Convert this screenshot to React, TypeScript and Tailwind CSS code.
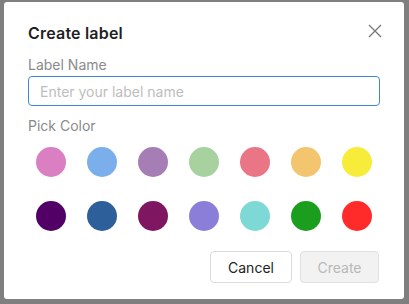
import React, { useState } from "react";

const COLORS = [
  ["#DA7FC1", "#7BAFEC", "#A67DB5", "#A8D1A0", "#EA7585", "#F4C56F", "#F8EC3A"],
  ["#520066", "#2D5F9A", "#7E1661", "#8A7ED8", "#7ED8D5", "#1B9E1E", "#FF2A2A"],
];

export default function App() {
  const [name, setName] = useState("");
  const [picked, setPicked] = useState<string | null>(null);

  return (
    <div
      className="w-[409px] h-[304px] bg-[#7f7f7f] pt-[2px] pl-[4px]"
      style={{ fontFamily: "Inter, 'Noto Sans', sans-serif" }}
    >
      <div className="w-[400px] h-[297px] bg-white rounded-[3px] px-6 pt-[19px]">
        <div className="flex items-center justify-between h-[24px]">
          <h2 className="text-[16px] font-semibold text-[#1f1f1f] tracking-[0.2px]">Create label</h2>
          <button type="button" className="text-[#777] -mr-[2px] -mt-[4px]">
            <svg width="14" height="14" viewBox="0 0 14 14" stroke="currentColor" strokeWidth="1.3" fill="none">
              <path d="M1 1 L13 13 M13 1 L1 13" />
            </svg>
          </button>
        </div>

        <label className="block mt-[10px] text-[14px] leading-[20px] text-[#8a8a8a]">Label Name</label>
        <input
          type="text"
          autoFocus
          value={name}
          onChange={(e) => setName(e.target.value)}
          placeholder="Enter your label name"
          className="mt-[1px] block w-full h-[30px] rounded-[4px] border border-[#3f86d6] px-[11px] text-[14px] text-[#333] placeholder:text-[#bdbdbd] outline-none caret-[#222]"
        />

        <label className="block mt-[10px] text-[14px] leading-[20px] text-[#8a8a8a]">Pick Color</label>
        <div className="mt-[11px] flex flex-col gap-[24px] px-2">
          {COLORS.map((row, i) => (
            <div key={i} className="flex justify-between">
              {row.map((c) => (
                <button
                  key={c}
                  type="button"
                  onClick={() => setPicked(c)}
                  className={`w-[30px] h-[30px] rounded-full ${picked === c ? "ring-2 ring-offset-2 ring-[#3f86d6]" : ""}`}
                  style={{ backgroundColor: c }}
                />
              ))}
            </div>
          ))}
        </div>

        <div className="mt-[20px] flex justify-end gap-[8px] pr-[1px]">
          <button
            type="button"
            className="w-[82px] h-[32px] rounded-[4px] border border-[#dcdcdc] bg-white text-[14px] text-[#222]"
          >
            Cancel
          </button>
          <button
            type="button"
            disabled
            className="w-[79px] h-[32px] rounded-[4px] border border-[#e0e0e0] bg-[#f2f2f2] text-[14px] text-[#b8b8b8]"
          >
            Create
          </button>
        </div>
      </div>
    </div>
  );
}
